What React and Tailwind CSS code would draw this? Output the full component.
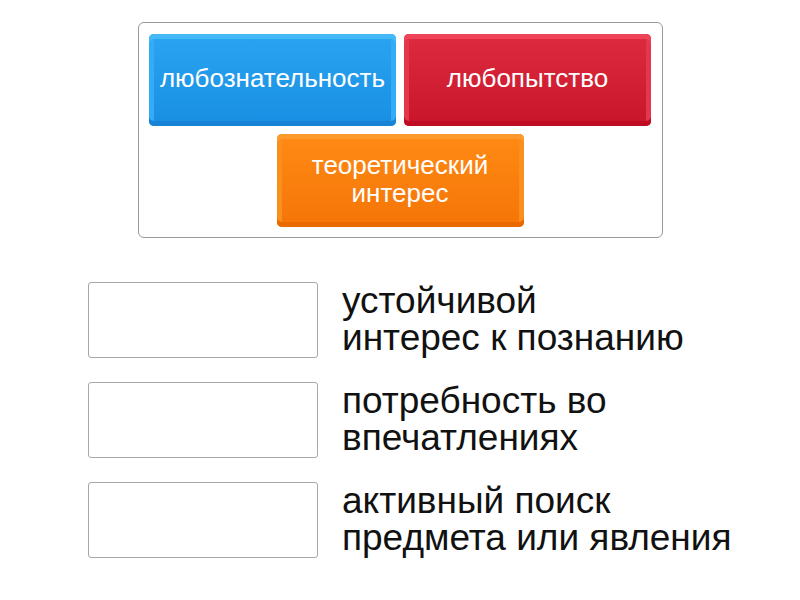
import React from 'react';

const tiles = [
  {
    label: 'любознательность',
    cls: 'bg-gradient-to-b from-[#2aa4f2] to-[#188fe2] shadow-[inset_0_5px_0_#45b9f8,inset_0_-5px_0_#1683d5,inset_5px_0_0_#33acf5,inset_-5px_0_0_#33acf5]',
  },
  {
    label: 'любопытство',
    cls: 'bg-gradient-to-b from-[#dd2a3f] to-[#c9142a] shadow-[inset_0_5px_0_#ef4357,inset_0_-5px_0_#bf0c22,inset_5px_0_0_#e3374b,inset_-5px_0_0_#e3374b]',
  },
];

const rows = [
  ['устойчивой', 'интерес к познанию'],
  ['потребность во', 'впечатлениях'],
  ['активный поиск', 'предмета или явления'],
];

export default function App() {
  return (
    <div className="w-[800px] h-[600px] bg-white" style={{ fontFamily: '"Liberation Sans", Arial, sans-serif' }}>
      <div className="pt-[22px] flex justify-center">
        <div className="w-[525px] h-[216px] border border-[#9a9a9a] rounded-[6px] px-[10px] pt-[11px] flex flex-col items-center gap-[8px]">
          <div className="flex gap-[8px]">
            {tiles.map((t) => (
              <div
                key={t.label}
                className={`w-[247px] h-[92px] pb-[4px] rounded-[5px] flex items-center justify-center text-white text-[26px] leading-[28px] ${t.cls}`}
              >
                {t.label}
              </div>
            ))}
          </div>
          <div className="w-[247px] h-[93px] pb-[4px] rounded-[5px] flex items-center justify-center text-center text-white text-[26px] leading-[28px] bg-gradient-to-b from-[#ff8a14] to-[#f57506] shadow-[inset_0_5px_0_#fd9a2c,inset_0_-5px_0_#e86a00,inset_5px_0_0_#fb8f1e,inset_-5px_0_0_#fb8f1e]">
            теоретический
            <br />
            интерес
          </div>
        </div>
      </div>
      <div className="mt-[44px] pl-[88px] flex flex-col gap-[24px]">
        {rows.map((r) => (
          <div key={r[0]} className="h-[76px] flex items-center">
            <div className="w-[230px] h-[76px] border border-[#a8a8a8] rounded-[3px] bg-white" />
            <div className="ml-[24px] pb-[2px] text-[37px] leading-[37px] text-[#111]">
              <div>{r[0]}</div>
              <div>{r[1]}</div>
            </div>
          </div>
        ))}
      </div>
    </div>
  );
}
